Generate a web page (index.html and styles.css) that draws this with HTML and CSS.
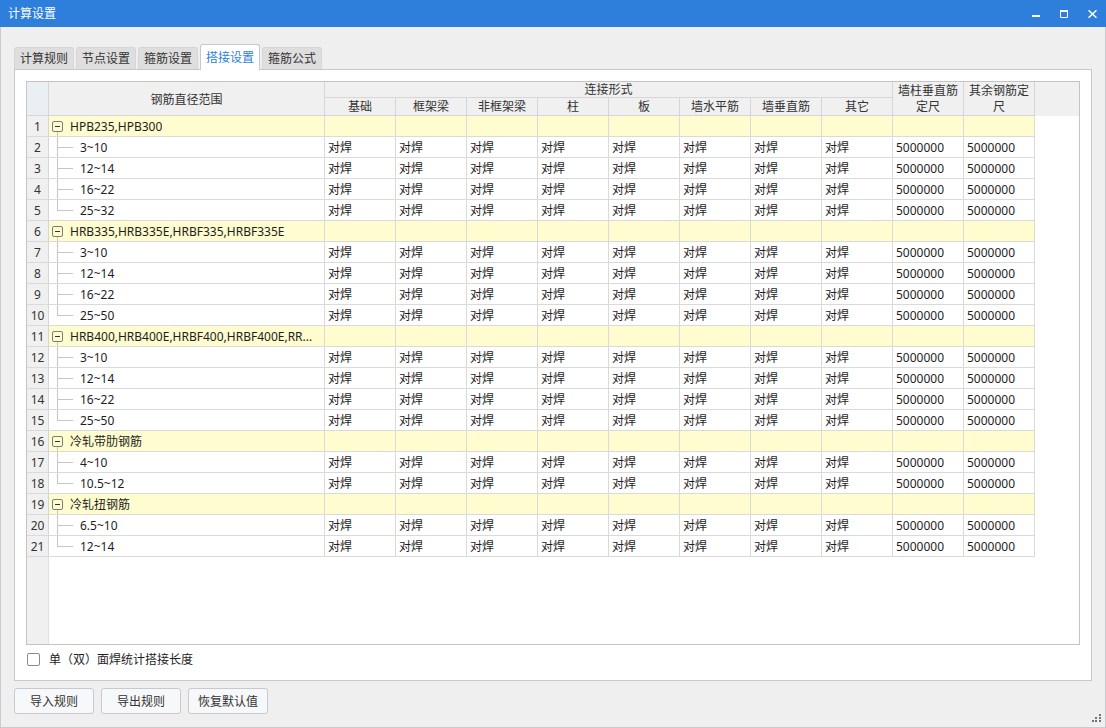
FILE: index.html
```html
<!DOCTYPE html>
<html lang="zh-CN">
<head>
<meta charset="utf-8">
<title>计算设置</title>
<link rel="stylesheet" href="styles.css">
</head>
<body>
<div class="window">
  <div class="titlebar">
    <div class="title">计算设置</div>
    <div class="winbtn"><svg width="8" height="8" viewBox="0 0 8 8"><rect x="0" y="5" width="8" height="2" fill="#fff"/></svg></div>
    <div class="winbtn"><svg width="8" height="8" viewBox="0 0 8 8"><path d="M0.5 1.5H7.5V7.5H0.5Z" fill="none" stroke="#fff" stroke-width="1"/><rect x="0" y="0" width="8" height="2" fill="#fff"/></svg></div>
    <div class="winbtn"><svg width="9" height="8" viewBox="0 0 9 8"><path d="M0.5 0.3L8.5 7.7M8.5 0.3L0.5 7.7" stroke="#fff" stroke-width="1.5"/></svg></div>
  </div>
  <div class="wbody">
    <div class="tabs">
      <div class="tab">计算规则</div>
      <div class="tab">节点设置</div>
      <div class="tab">箍筋设置</div>
      <div class="tab active">搭接设置</div>
      <div class="tab">箍筋公式</div>
    </div>
    <div class="panel">
      <div class="grid">
        <div class="ghead">
          <div class="h corner"></div>
          <div class="h hmain">钢筋直径范围</div>
          <div class="h hgroup">连接形式</div>
          <div class="h hspan c11">墙柱垂直筋定尺</div>
          <div class="h hspan c12">其余钢筋定尺</div>
          <div class="h hfill"></div>
          <div class="h hsub">基础</div>
          <div class="h hsub">框架梁</div>
          <div class="h hsub">非框架梁</div>
          <div class="h hsub">柱</div>
          <div class="h hsub">板</div>
          <div class="h hsub">墙水平筋</div>
          <div class="h hsub">墙垂直筋</div>
          <div class="h hsub">其它</div>
        </div>
        <div class="gbody">
          <div class="row grp"><div class="rn">1</div><div class="tc gnode"><span class="tbox"></span><span class="tt">HPB235,HPB300</span></div><div class="c"></div><div class="c"></div><div class="c"></div><div class="c"></div><div class="c"></div><div class="c"></div><div class="c"></div><div class="c"></div><div class="c"></div><div class="c"></div><div class="fill"></div></div>
          <div class="row"><div class="rn">2</div><div class="tc child">3~10</div><div class="c">对焊</div><div class="c">对焊</div><div class="c">对焊</div><div class="c">对焊</div><div class="c">对焊</div><div class="c">对焊</div><div class="c">对焊</div><div class="c">对焊</div><div class="c">5000000</div><div class="c">5000000</div><div class="fill"></div></div>
          <div class="row"><div class="rn">3</div><div class="tc child">12~14</div><div class="c">对焊</div><div class="c">对焊</div><div class="c">对焊</div><div class="c">对焊</div><div class="c">对焊</div><div class="c">对焊</div><div class="c">对焊</div><div class="c">对焊</div><div class="c">5000000</div><div class="c">5000000</div><div class="fill"></div></div>
          <div class="row"><div class="rn">4</div><div class="tc child">16~22</div><div class="c">对焊</div><div class="c">对焊</div><div class="c">对焊</div><div class="c">对焊</div><div class="c">对焊</div><div class="c">对焊</div><div class="c">对焊</div><div class="c">对焊</div><div class="c">5000000</div><div class="c">5000000</div><div class="fill"></div></div>
          <div class="row"><div class="rn">5</div><div class="tc child last">25~32</div><div class="c">对焊</div><div class="c">对焊</div><div class="c">对焊</div><div class="c">对焊</div><div class="c">对焊</div><div class="c">对焊</div><div class="c">对焊</div><div class="c">对焊</div><div class="c">5000000</div><div class="c">5000000</div><div class="fill"></div></div>
          <div class="row grp"><div class="rn">6</div><div class="tc gnode"><span class="tbox"></span><span class="tt">HRB335,HRB335E,HRBF335,HRBF335E</span></div><div class="c"></div><div class="c"></div><div class="c"></div><div class="c"></div><div class="c"></div><div class="c"></div><div class="c"></div><div class="c"></div><div class="c"></div><div class="c"></div><div class="fill"></div></div>
          <div class="row"><div class="rn">7</div><div class="tc child">3~10</div><div class="c">对焊</div><div class="c">对焊</div><div class="c">对焊</div><div class="c">对焊</div><div class="c">对焊</div><div class="c">对焊</div><div class="c">对焊</div><div class="c">对焊</div><div class="c">5000000</div><div class="c">5000000</div><div class="fill"></div></div>
          <div class="row"><div class="rn">8</div><div class="tc child">12~14</div><div class="c">对焊</div><div class="c">对焊</div><div class="c">对焊</div><div class="c">对焊</div><div class="c">对焊</div><div class="c">对焊</div><div class="c">对焊</div><div class="c">对焊</div><div class="c">5000000</div><div class="c">5000000</div><div class="fill"></div></div>
          <div class="row"><div class="rn">9</div><div class="tc child">16~22</div><div class="c">对焊</div><div class="c">对焊</div><div class="c">对焊</div><div class="c">对焊</div><div class="c">对焊</div><div class="c">对焊</div><div class="c">对焊</div><div class="c">对焊</div><div class="c">5000000</div><div class="c">5000000</div><div class="fill"></div></div>
          <div class="row"><div class="rn">10</div><div class="tc child last">25~50</div><div class="c">对焊</div><div class="c">对焊</div><div class="c">对焊</div><div class="c">对焊</div><div class="c">对焊</div><div class="c">对焊</div><div class="c">对焊</div><div class="c">对焊</div><div class="c">5000000</div><div class="c">5000000</div><div class="fill"></div></div>
          <div class="row grp"><div class="rn">11</div><div class="tc gnode"><span class="tbox"></span><span class="tt">HRB400,HRB400E,HRBF400,HRBF400E,RR...</span></div><div class="c"></div><div class="c"></div><div class="c"></div><div class="c"></div><div class="c"></div><div class="c"></div><div class="c"></div><div class="c"></div><div class="c"></div><div class="c"></div><div class="fill"></div></div>
          <div class="row"><div class="rn">12</div><div class="tc child">3~10</div><div class="c">对焊</div><div class="c">对焊</div><div class="c">对焊</div><div class="c">对焊</div><div class="c">对焊</div><div class="c">对焊</div><div class="c">对焊</div><div class="c">对焊</div><div class="c">5000000</div><div class="c">5000000</div><div class="fill"></div></div>
          <div class="row"><div class="rn">13</div><div class="tc child">12~14</div><div class="c">对焊</div><div class="c">对焊</div><div class="c">对焊</div><div class="c">对焊</div><div class="c">对焊</div><div class="c">对焊</div><div class="c">对焊</div><div class="c">对焊</div><div class="c">5000000</div><div class="c">5000000</div><div class="fill"></div></div>
          <div class="row"><div class="rn">14</div><div class="tc child">16~22</div><div class="c">对焊</div><div class="c">对焊</div><div class="c">对焊</div><div class="c">对焊</div><div class="c">对焊</div><div class="c">对焊</div><div class="c">对焊</div><div class="c">对焊</div><div class="c">5000000</div><div class="c">5000000</div><div class="fill"></div></div>
          <div class="row"><div class="rn">15</div><div class="tc child last">25~50</div><div class="c">对焊</div><div class="c">对焊</div><div class="c">对焊</div><div class="c">对焊</div><div class="c">对焊</div><div class="c">对焊</div><div class="c">对焊</div><div class="c">对焊</div><div class="c">5000000</div><div class="c">5000000</div><div class="fill"></div></div>
          <div class="row grp"><div class="rn">16</div><div class="tc gnode"><span class="tbox"></span><span class="tt">冷轧带肋钢筋</span></div><div class="c"></div><div class="c"></div><div class="c"></div><div class="c"></div><div class="c"></div><div class="c"></div><div class="c"></div><div class="c"></div><div class="c"></div><div class="c"></div><div class="fill"></div></div>
          <div class="row"><div class="rn">17</div><div class="tc child">4~10</div><div class="c">对焊</div><div class="c">对焊</div><div class="c">对焊</div><div class="c">对焊</div><div class="c">对焊</div><div class="c">对焊</div><div class="c">对焊</div><div class="c">对焊</div><div class="c">5000000</div><div class="c">5000000</div><div class="fill"></div></div>
          <div class="row"><div class="rn">18</div><div class="tc child last">10.5~12</div><div class="c">对焊</div><div class="c">对焊</div><div class="c">对焊</div><div class="c">对焊</div><div class="c">对焊</div><div class="c">对焊</div><div class="c">对焊</div><div class="c">对焊</div><div class="c">5000000</div><div class="c">5000000</div><div class="fill"></div></div>
          <div class="row grp"><div class="rn">19</div><div class="tc gnode"><span class="tbox"></span><span class="tt">冷轧扭钢筋</span></div><div class="c"></div><div class="c"></div><div class="c"></div><div class="c"></div><div class="c"></div><div class="c"></div><div class="c"></div><div class="c"></div><div class="c"></div><div class="c"></div><div class="fill"></div></div>
          <div class="row"><div class="rn">20</div><div class="tc child">6.5~10</div><div class="c">对焊</div><div class="c">对焊</div><div class="c">对焊</div><div class="c">对焊</div><div class="c">对焊</div><div class="c">对焊</div><div class="c">对焊</div><div class="c">对焊</div><div class="c">5000000</div><div class="c">5000000</div><div class="fill"></div></div>
          <div class="row"><div class="rn">21</div><div class="tc child last">12~14</div><div class="c">对焊</div><div class="c">对焊</div><div class="c">对焊</div><div class="c">对焊</div><div class="c">对焊</div><div class="c">对焊</div><div class="c">对焊</div><div class="c">对焊</div><div class="c">5000000</div><div class="c">5000000</div><div class="fill"></div></div>
        </div>
        <div class="gempty"><div class="rn-empty"></div></div>
      </div>
      <div class="foot">
        <span class="checkbox"></span>
        <span class="cblabel">单（双）面焊统计搭接长度</span>
      </div>
    </div>
    <div class="buttons">
      <button class="btn">导入规则</button>
      <button class="btn">导出规则</button>
      <button class="btn">恢复默认值</button>
    </div>
    <svg class="grip" width="10" height="10" viewBox="0 0 10 10">
      <rect x="7" y="0" width="2" height="2" fill="#6f7378"/>
      <rect x="3" y="3" width="2" height="2" fill="#6f7378"/>
      <rect x="7" y="3" width="2" height="2" fill="#6f7378"/>
      <rect x="0" y="6" width="2" height="2" fill="#6f7378"/>
      <rect x="3" y="6" width="2" height="2" fill="#6f7378"/>
      <rect x="7" y="6" width="2" height="2" fill="#6f7378"/>
    </svg>
  </div>
</div>
</body>
</html>
```

FILE: styles.css
```css
* { box-sizing: border-box; }

body {
  margin: 0;
  font-family: "Noto Sans", "Noto Sans CJK SC", sans-serif;
  font-size: 12px;
  color: #1e1e1e;
}

.window {
  width: 1106px;
  height: 728px;
  display: flex;
  flex-direction: column;
  background: #efefef;
}

.titlebar {
  flex: none;
  height: 27px;
  background: #2e7fdc;
  color: #fff;
  display: flex;
  align-items: center;
  padding-left: 8px;
}

.title {
  flex: 1;
  font-size: 12px;
  line-height: 27px;
}

.winbtn {
  width: 28px;
  height: 27px;
  display: flex;
  align-items: center;
  justify-content: center;
}

.wbody {
  flex: 1;
  position: relative;
  border: 1px solid #c9cbce;
  border-top: none;
  padding: 17px 13px 0 13px;
  display: flex;
  flex-direction: column;
}

.tabs {
  flex: none;
  height: 25px;
  display: flex;
  align-items: flex-end;
  gap: 2px;
}

.tab {
  height: 22px;
  width: 60px;
  line-height: 21px;
  text-align: center;
  background: #dedede;
  border: 1px solid #d6d6d6;
  border-bottom: none;
  border-radius: 3px 3px 0 0;
  color: #333;
}

.tab.active {
  position: relative;
  z-index: 1;
  height: 26px;
  margin-bottom: -1px;
  line-height: 26px;
  background: #fff;
  border-color: #c8c8c8;
  color: #2e7fdc;
}

.panel {
  flex: none;
  height: 612px;
  background: #fff;
  border: 1px solid #c8c8c8;
  padding: 11px 11px 0 11px;
}

.grid {
  width: 1054px;
  height: 564px;
  border: 1px solid #c4c4c4;
  display: flex;
  flex-direction: column;
}

.ghead {
  display: grid;
  grid-template-columns: 22px 276px repeat(10, 71px) 44px;
  grid-template-rows: 16px 18px;
  flex: none;
}

.h {
  background: #f0f0f0;
  border-right: 1px solid #d6d6d6;
  border-bottom: 1px solid #d6d6d6;
  color: #333;
  display: flex;
  align-items: center;
  justify-content: center;
  text-align: center;
  white-space: nowrap;
}

.corner {
  grid-row: 1 / 3;
  grid-column: 1;
  background: #ebeef3;
}

.hmain {
  grid-row: 1 / 3;
  grid-column: 2;
}

.hgroup {
  grid-row: 1;
  grid-column: 3 / 11;
  line-height: 15px;
}

.hspan {
  grid-row: 1 / 3;
  white-space: normal;
  line-height: 16px;
  padding-top: 1px;
}

.c11 { grid-column: 11; }
.c12 { grid-column: 12; }

.hfill {
  grid-row: 1 / 3;
  grid-column: 13;
  border-right: none;
  border-bottom: none;
}

.hsub {
  grid-row: 2;
  line-height: 17px;
}

.gbody {
  flex: none;
}

.row {
  display: grid;
  grid-template-columns: 22px 276px repeat(10, 71px) 44px;
  height: 21px;
}

.rn {
  background: #f0f0f0;
  border-right: 1px solid #d6d6d6;
  border-bottom: 1px solid #dadada;
  color: #333;
  text-align: center;
  padding-top: 1px;
  line-height: 19px;
}

.tc,
.c {
  border-right: 1px solid #dadada;
  border-bottom: 1px solid #dadada;
  padding-top: 1px;
  line-height: 19px;
  white-space: nowrap;
  overflow: hidden;
}

.c {
  padding-left: 3px;
}

.fill {
  background: #fff;
}

.grp .tc,
.grp .c {
  background: #fffccf;
}

.tc {
  position: relative;
}

.tc.gnode {
  display: flex;
  align-items: center;
}

.tbox {
  flex: none;
  position: relative;
  width: 11px;
  height: 11px;
  margin: 0 7px 0 3px;
  border: 1px solid #7c7c7c;
  border-radius: 2px;
}

.tbox::before {
  content: "";
  position: absolute;
  left: 2px;
  right: 2px;
  top: 4px;
  height: 1px;
  background: #333;
}

.tc.gnode::after {
  content: "";
  position: absolute;
  left: 8px;
  top: 16px;
  bottom: 0;
  border-left: 1px solid #c6c6c6;
}

.tt {
  overflow: hidden;
}

.tc.child {
  padding-left: 31px;
}

.tc.child::before {
  content: "";
  position: absolute;
  left: 8px;
  top: 0;
  bottom: 0;
  border-left: 1px solid #c6c6c6;
}

.tc.child.last::before {
  bottom: 50%;
}

.tc.child::after {
  content: "";
  position: absolute;
  left: 8px;
  top: 50%;
  width: 16px;
  border-top: 1px solid #c6c6c6;
}

.gempty {
  flex: 1;
  display: flex;
}

.rn-empty {
  width: 22px;
  background: #f0f0f0;
  border-right: 1px solid #e2e2e2;
}

.foot {
  height: 35px;
  display: flex;
  align-items: flex-start;
  padding-top: 8px;
}

.checkbox {
  width: 13px;
  height: 13px;
  margin-left: 1px;
  border: 1px solid #8a8a8a;
  border-radius: 2px;
  background: #fff;
}

.cblabel {
  margin-left: 9px;
  line-height: 14px;
  color: #1e1e1e;
}

.buttons {
  flex: none;
  margin-top: 7px;
  display: flex;
  gap: 7px;
}

.btn {
  width: 80px;
  height: 26px;
  padding: 0;
  font-family: "Noto Sans", "Noto Sans CJK SC", sans-serif;
  font-size: 12px;
  color: #333;
  background: #f7f8fa;
  border: 1px solid #c6c9d1;
  border-radius: 3px;
}

.grip {
  position: absolute;
  right: 3px;
  bottom: 3px;
}
```
